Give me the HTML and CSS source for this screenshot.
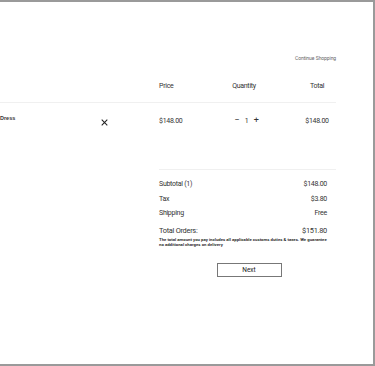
FILE: index.html
```html
<!DOCTYPE html>
<html lang="en">
  <head>
    <meta charset="UTF-8" />
    <meta name="viewport" content="width=device-width, initial-scale=1.0" />
    <title>Shopping Bag</title>
    <link rel="stylesheet" href="styles.css">
  </head>
  <body>
    <div class="frame">
      <div class="cart">
        <div class="cart-top">
          <a href="#" class="continue-link">Continue Shopping</a>
        </div>

        <div class="cart-row cart-head">
          <div class="col-product"></div>
          <div class="col-price">Price</div>
          <div class="col-qty">Quantity</div>
          <div class="col-total">Total</div>
        </div>

        <div class="cart-row cart-item">
          <div class="col-product">
            <span class="item-name">Dress</span>
            <button class="btn-remove" aria-label="Remove">
              <svg width="7" height="7" viewBox="0 0 10 10">
                <path d="M1 1 L9 9 M9 1 L1 9" stroke="#222" stroke-width="1.5" fill="none" />
              </svg>
            </button>
          </div>
          <div class="col-price">$148.00</div>
          <div class="col-qty qty-control">
            <span class="qty-btn">&minus;</span>
            <span class="qty-value">1</span>
            <span class="qty-btn">+</span>
          </div>
          <div class="col-total">$148.00</div>
        </div>

        <div class="summary">
          <div class="summary-row">
            <span>Subtotal (1)</span>
            <span>$148.00</span>
          </div>
          <div class="summary-row">
            <span>Tax</span>
            <span>$3.80</span>
          </div>
          <div class="summary-row">
            <span>Shipping</span>
            <span>Free</span>
          </div>
          <div class="summary-row summary-total">
            <span>Total Orders:</span>
            <span>$151.80</span>
          </div>
          <p class="summary-note">
            The total amount you pay includes all applicable customs duties &amp; taxes. We guarantee<br>
            no additional charges on delivery
          </p>
          <div class="summary-actions">
            <button class="btn-next">Next</button>
          </div>
        </div>
      </div>
    </div>
  </body>
</html>
```

FILE: styles.css
```css
/* Basis */
body {
  font-family: Roboto, sans-serif;
  margin: 0;
  padding: 0;
  background-color: white;
  color: #333;
}

.frame {
  box-sizing: border-box;
  width: 375px;
  height: 366px;
  border-top: 2px solid #9a9a9a;
  border-right: 2px solid #9a9a9a;
  border-bottom: 2px solid #9a9a9a;
  overflow: hidden;
}

.cart {
  width: 336px;
}

/* Top link */
.cart-top {
  display: flex;
  justify-content: flex-end;
  padding-top: 53px;
  height: 14px;
}

.continue-link {
  font-size: 5px;
  letter-spacing: -0.1px;
  word-spacing: 0.5px;
  color: #666;
  text-decoration: none;
}

/* Table rows */
.cart-row {
  display: grid;
  grid-template-columns: 159px 50px 70px 57px;
  font-size: 7px;
  letter-spacing: -0.28px;
}

.cart-head {
  align-items: center;
  height: 33px;
  border-bottom: 1px solid #f0f0f0;
}

.cart-item {
  padding-top: 14px;
  height: 52px;
}

.col-qty,
.col-total {
  text-align: center;
}

.col-total {
  padding-left: 19px;
}

.col-product {
  position: relative;
}

.item-name {
  font-family: "Liberation Sans", Arial, sans-serif;
  font-weight: bold;
  font-size: 5.5px;
  letter-spacing: 0;
  position: relative;
  top: -3px;
}

.btn-remove {
  position: absolute;
  left: 101px;
  top: 2px;
  padding: 0;
  border: none;
  background: none;
  line-height: 0;
}

.qty-control {
  padding-left: 5px;
}

.qty-btn {
  font-size: 9px;
  line-height: 7px;
}

.qty-value {
  margin: 0 4px;
}

/* Summary */
.summary {
  margin-left: 159px;
  border-top: 1px solid #f0f0f0;
  padding-top: 10px;
}

.summary-row {
  display: flex;
  justify-content: space-between;
  padding-right: 9px;
  font-size: 7px;
  letter-spacing: -0.28px;
  height: 14.5px;
}

.summary-total {
  padding-top: 2px;
  height: 10px;
  font-size: 7.4px;
}

.summary-note {
  margin: 0;
  padding-top: 1px;
  font-size: 4.3px;
  font-weight: bold;
  letter-spacing: 0;
  line-height: 5.5px;
  white-space: nowrap;
}

.summary-actions {
  display: flex;
  justify-content: center;
  padding-top: 15px;
  padding-left: 3px;
}

.btn-next {
  width: 65px;
  height: 14px;
  padding: 0;
  border: 1px solid #777;
  background-color: white;
  font-family: Roboto, sans-serif;
  font-size: 6.5px;
  color: #222;
  cursor: pointer;
}
```
